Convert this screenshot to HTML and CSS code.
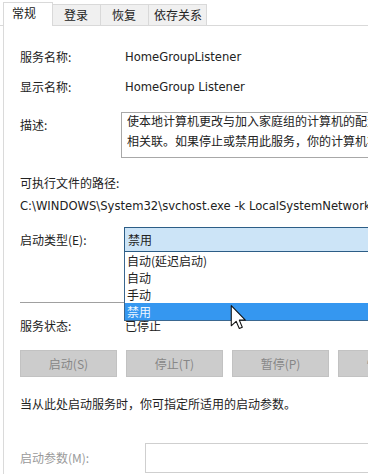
FILE: index.html
```html
<!DOCTYPE html>
<html lang="zh-CN">
<head>
  <meta charset="UTF-8">
  <meta name="viewport" content="width=device-width, initial-scale=1.0">
  <title>HomeGroup Listener 的属性</title>
  <link rel="stylesheet" href="styles.css">
</head>
<body>
  <div class="window">
    <div class="tabs">
      <div class="tab active">常规</div>
      <div class="tab">登录</div>
      <div class="tab">恢复</div>
      <div class="tab wide">依存关系</div>
    </div>

    <div class="panel">
      <div class="row first">
        <span class="label">服务名称:</span>
        <span class="value latin">HomeGroupListener</span>
      </div>
      <div class="row">
        <span class="label">显示名称:</span>
        <span class="value latin">HomeGroup Listener</span>
      </div>
      <div class="row desc-row">
        <span class="label">描述:</span>
        <div class="desc-box">
          <p>使本地计算机更改与加入家庭组的计算机的配置和维护相关联。如果停止或禁用此服务，你的计算机将无法检测其他家庭组并且无法正常工作。</p>
        </div>
      </div>

      <div class="path-label">可执行文件的路径:</div>
      <div class="path latin">C:\WINDOWS\System32\svchost.exe -k LocalSystemNetworkRestricted</div>

      <div class="row startup-row">
        <span class="label">启动类型(E):</span>
        <div class="combo">
          <div class="combo-value">禁用</div>
          <!-- open drop-down list -->
          <ul class="combo-list">
            <li>自动(延迟启动)</li>
            <li>自动</li>
            <li>手动</li>
            <li class="selected">禁用</li>
          </ul>
          <svg class="cursor" width="17" height="25" viewBox="0 0 12 19">
            <path d="M0.5 0.5 V15.8 L4.2 12.4 L6.6 17.9 L8.9 16.9 L6.6 11.5 H11.2 Z" fill="#fff" stroke="#111" stroke-width="0.8" stroke-linejoin="round"/>
          </svg>
        </div>
      </div>

      <div class="separator"></div>

      <div class="row status-row">
        <span class="label">服务状态:</span>
        <span class="value">已停止</span>
      </div>

      <div class="buttons">
        <button class="btn" disabled>启动(S)</button>
        <button class="btn" disabled>停止(T)</button>
        <button class="btn" disabled>暂停(P)</button>
        <button class="btn" disabled>恢复(R)</button>
      </div>

      <p class="hint">当从此处启动服务时，你可指定所适用的启动参数。</p>

      <div class="row params-row">
        <span class="label muted">启动参数(M):</span>
        <input class="params-input" type="text" disabled>
      </div>
    </div>
  </div>
</body>
</html>
```

FILE: styles.css
```css
/* General Reset */
body {
  margin: 0;
  padding: 0;
  background-color: #ffffff;
  font-family: "Noto Sans CJK SC", sans-serif;
  font-size: 12px;
  color: #222222;
  overflow: hidden;
}

.window {
  width: 460px;
}

/* Tab strip */
.tabs {
  display: flex;
  align-items: flex-end;
  height: 25px;
  padding-left: 3px;
  border-bottom: 1px solid #d9d9d9;
}

.tab {
  height: 20px;
  line-height: 19px;
  padding: 0 12px 0 11px;
  background-color: #f0f0f0;
  border: 1px solid #d9d9d9;
  border-bottom: none;
  margin-left: -1px;
}

.tab.active {
  height: 23px;
  line-height: 20px;
  padding: 0 16px 0 8px;
  margin-left: 0;
  margin-bottom: -1px;
  background-color: #ffffff;
  position: relative;
  z-index: 1;
}

.tab.wide {
  padding: 0 4px 0 5px;
}

/* Page body */
.panel {
  margin-left: 3px;
  border-left: 1px solid #dadada;
  padding: 21px 0 0 16px;
  height: 460px;
}

.row {
  display: flex;
  align-items: center;
  line-height: 20px;
  margin-top: 10px;
}

.row.first {
  margin-top: 0;
}

.label {
  width: 105px;
  flex-shrink: 0;
}

.value {
  white-space: nowrap;
}

.latin {
  font-family: "DejaVu Sans", "Noto Sans CJK SC", sans-serif;
  font-size: 11.6px;
}

.desc-row {
  align-items: flex-start;
  margin-top: 15px;
}

.desc-row .label {
  margin-top: 3px;
}

.desc-box {
  margin-left: -4px;
  width: 292px;
  height: 44px;
  border: 1px solid #a8a8a8;
  padding: 0 0 0 5px;
  overflow: hidden;
  flex-shrink: 0;
}

.desc-box p {
  margin: -2px 0 0;
  line-height: 20px;
  height: 40px;
  overflow: hidden;
}

.path-label {
  margin-top: 15px;
  line-height: 20px;
}

.path {
  margin-top: 3px;
  line-height: 20px;
  white-space: nowrap;
}

/* Startup type combo with open list */
.startup-row {
  margin-top: 11px;
}

.combo {
  position: relative;
  margin-left: -1px;
  width: 300px;
}

.combo-value {
  height: 23px;
  line-height: 23px;
  padding-left: 3px;
  background-color: #cce4f7;
  border: 1px solid #2c5d86;
}

.combo-list {
  position: absolute;
  top: 25px;
  left: 0;
  right: 0;
  margin: 0;
  padding: 0;
  list-style: none;
  background-color: #ffffff;
  border: 1px solid #3a6790;
  border-top: none;
  z-index: 2;
}

.combo-list li {
  height: 17px;
  line-height: 17px;
  padding-left: 2px;
}

.combo-list li.selected {
  background-color: #3597f0;
  color: #eef6ff;
}

.cursor {
  position: absolute;
  left: 106px;
  top: 78px;
  z-index: 3;
}

.separator {
  margin-top: 50px;
  height: 1px;
  background-color: #a0a0a0;
}

.status-row {
  margin-top: 13px;
}

/* Disabled service buttons */
.buttons {
  display: flex;
  gap: 9px;
  margin-top: 14px;
}

.btn {
  width: 97px;
  height: 27px;
  flex-shrink: 0;
  background-color: #cccccc;
  border: 1px solid #c2c2c2;
  color: #878787;
  font-family: "Noto Sans CJK SC", sans-serif;
  font-size: 12px;
  padding: 0;
}

.hint {
  margin: 17px 0 0;
  line-height: 20px;
}

.params-row {
  margin-top: 29px;
}

.label.muted {
  width: 125px;
  color: #9a9a9a;
}

.params-input {
  width: 260px;
  height: 30px;
  box-sizing: border-box;
  border: 1px solid #cfcfcf;
  background-color: #ffffff;
  margin: 0;
}
```
